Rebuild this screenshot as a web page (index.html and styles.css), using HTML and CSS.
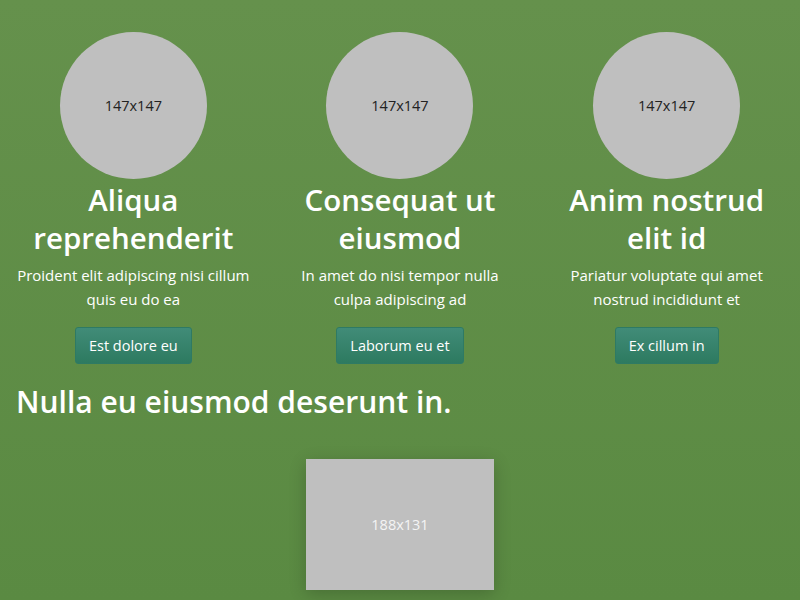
FILE: index.html
```html
<!DOCTYPE html>
<html>
<head>
<meta charset="utf-8">
<link rel="stylesheet" href="styles.css">
</head>
<body>
<div class="page">
  <div class="features">
    <div class="feature">
      <div class="avatar">147x147</div>
      <h2 class="feature-title">Aliqua reprehenderit</h2>
      <p class="feature-text">Proident elit adipiscing nisi cillum quis eu do ea</p>
      <a class="btn">Est dolore eu</a>
    </div>
    <div class="feature">
      <div class="avatar">147x147</div>
      <h2 class="feature-title">Consequat ut eiusmod</h2>
      <p class="feature-text">In amet do nisi tempor nulla culpa adipiscing ad</p>
      <a class="btn">Laborum eu et</a>
    </div>
    <div class="feature">
      <div class="avatar">147x147</div>
      <h2 class="feature-title">Anim nostrud elit id</h2>
      <p class="feature-text">Pariatur voluptate qui amet nostrud incididunt et</p>
      <a class="btn">Ex cillum in</a>
    </div>
  </div>
  <h1 class="section-title">Nulla eu eiusmod deserunt in.</h1>
  <div class="media">
    <div class="picture">188x131</div>
  </div>
</div>
</body>
</html>
```
FILE: styles.css
```css
html, body {
  margin: 0;
  padding: 0;
  height: 100%;
}
body {
  background: linear-gradient(to bottom, #65914c 0%, #5a8a42 100%);
  font-family: "Open Sans", "Noto Sans", sans-serif;
  color: #fff;
  overflow: hidden;
}
.page {
  padding-top: 32px;
}
.features {
  display: grid;
  grid-template-columns: repeat(3, 1fr);
}
.feature {
  display: flex;
  flex-direction: column;
  align-items: center;
  text-align: center;
  padding: 0 16px;
}
.avatar {
  width: 147px;
  height: 147px;
  border-radius: 50%;
  background: #bfbfbf;
  color: #222;
  font-size: 14.5px;
  display: flex;
  align-items: center;
  justify-content: center;
}
.feature-title {
  margin: 2px 0 0;
  font-size: 29.5px;
  line-height: 38px;
  font-weight: 600;
}
.feature-text {
  margin: 6px 0 0;
  font-size: 15px;
  line-height: 24px;
}
.btn {
  margin-top: 16px;
  display: inline-block;
  padding: 0 13px;
  height: 37px;
  line-height: 35px;
  box-sizing: border-box;
  border: 1px solid #2e7a64;
  border-radius: 3px;
  background: linear-gradient(to bottom, #418c78, #2d7a60);
  color: #fff;
  font-size: 14.5px;
}
.section-title {
  margin: 18px 0 0;
  padding: 0 16px;
  font-size: 30px;
  line-height: 40px;
  font-weight: 600;
}
.media {
  display: flex;
  justify-content: center;
  margin-top: 37px;
}
.picture {
  width: 188px;
  height: 131px;
  background: #bfbfbf;
  color: #f4f4f4;
  font-size: 14.5px;
  display: flex;
  align-items: center;
  justify-content: center;
  box-shadow: 0 4px 16px rgba(0,0,0,0.2);
}
```
